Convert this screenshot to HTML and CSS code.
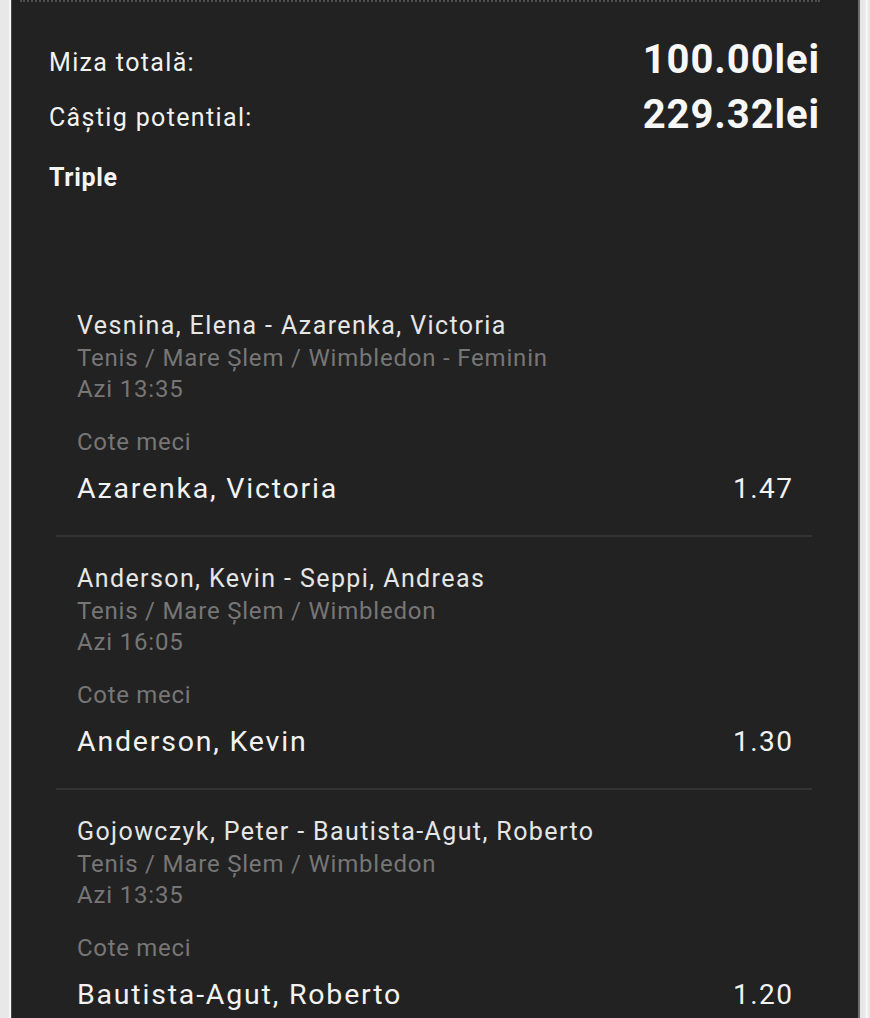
FILE: index.html
```html
<!DOCTYPE html>
<html lang="ro">
<head>
<meta charset="utf-8">
<title>Bilet</title>
<link rel="stylesheet" href="styles.css">
</head>
<body>
<div class="frame">
  <div class="edge edge-left"></div>
  <main class="panel">
    <div class="dots"></div>
    <section class="summary">
      <div class="sum-row">
        <span class="sum-label">Miza totală:</span>
        <span class="sum-value">100.00lei</span>
      </div>
      <div class="sum-row">
        <span class="sum-label">Câștig potential:</span>
        <span class="sum-value">229.32lei</span>
      </div>
      <div class="bet-type">Triple</div>
    </section>
    <section class="items">
      <article class="item">
        <div class="match">Vesnina, Elena - Azarenka, Victoria</div>
        <div class="meta">Tenis / Mare Șlem / Wimbledon - Feminin</div>
        <div class="meta time">Azi 13:35</div>
        <div class="market">Cote meci</div>
        <div class="pick"><span>Azarenka, Victoria</span><span class="odd">1.47</span></div>
      </article>
      <article class="item">
        <div class="match">Anderson, Kevin - Seppi, Andreas</div>
        <div class="meta">Tenis / Mare Șlem / Wimbledon</div>
        <div class="meta time">Azi 16:05</div>
        <div class="market">Cote meci</div>
        <div class="pick"><span>Anderson, Kevin</span><span class="odd">1.30</span></div>
      </article>
      <article class="item">
        <div class="match">Gojowczyk, Peter - Bautista-Agut, Roberto</div>
        <div class="meta">Tenis / Mare Șlem / Wimbledon</div>
        <div class="meta time">Azi 13:35</div>
        <div class="market">Cote meci</div>
        <div class="pick"><span>Bautista-Agut, Roberto</span><span class="odd">1.20</span></div>
      </article>
    </section>
  </main>
  <div class="edge edge-right"></div>
</div>
</body>
</html>
```

FILE: styles.css
```css
html, body {
  margin: 0;
  padding: 0;
  background: #e9e9e9;
  height: 100%;
  overflow: hidden;
}
body {
  font-family: Roboto, "Noto Sans", "Liberation Sans", sans-serif;
  color: #f0f0f0;
}
.frame {
  display: flex;
  height: 1018px;
}
.edge {
  flex: 0 0 12px;
}
.edge-left {
  background: linear-gradient(to right, #e8e8e8 0, #e8e8e8 9px, #f7f7f7 9px, #f7f7f7 11px, #4a4a4a 11px, #4a4a4a 12px);
}
.edge-right {
  background: linear-gradient(to right, #6e6e6e 0, #6e6e6e 2px, #e4e4e4 2px, #e8e8e8 7px, #f6f6f6 8px, #f6f6f6 10px, #e8e8e8 10px);
}
.panel {
  flex: 0 0 846px;
  background: #222222;
  overflow: hidden;
}
.dots {
  height: 0;
  margin: 0 38px 0 8px;
  border-top: 2px dotted #4d4d4d;
}
.summary {
  padding: 33px 38px 0 37px;
}
.sum-row {
  display: flex;
  justify-content: space-between;
  align-items: center;
  height: 55px;
}
.sum-label {
  font-size: 25px;
  letter-spacing: 1.35px;
  color: #f2f2f2;
}
.sum-value {
  font-size: 40px;
  font-weight: 700;
  color: #f7f7f7;
  letter-spacing: 0.9px;
  margin-top: -6px;
}
.bet-type {
  margin-top: 15px;
  font-size: 25px;
  line-height: 36px;
  font-weight: 700;
  letter-spacing: 0.7px;
  color: #f4f4f4;
}
.items {
  margin: 114px 46px 0 44px;
}
.item {
  padding: 0 20px 26px 21px;
  border-bottom: 2px solid #333333;
  margin-bottom: 26px;
}
.match {
  font-size: 25px;
  letter-spacing: 1.4px;
  line-height: 32px;
  color: #e6e6e6;
}
.meta {
  font-size: 24px;
  letter-spacing: 0.8px;
  line-height: 32px;
  color: #767676;
}
.meta.time {
  line-height: 30px;
}
.market {
  margin-top: 23px;
  font-size: 24px;
  letter-spacing: 0.7px;
  line-height: 30px;
  color: #767676;
}
.pick {
  margin-top: 12px;
  display: flex;
  justify-content: space-between;
  font-size: 28.5px;
  letter-spacing: 1.8px;
  line-height: 40px;
  color: #f2f2f2;
}
.odd {
  font-size: 28px;
  letter-spacing: 1.5px;
  margin-right: -1.5px;
}
```
